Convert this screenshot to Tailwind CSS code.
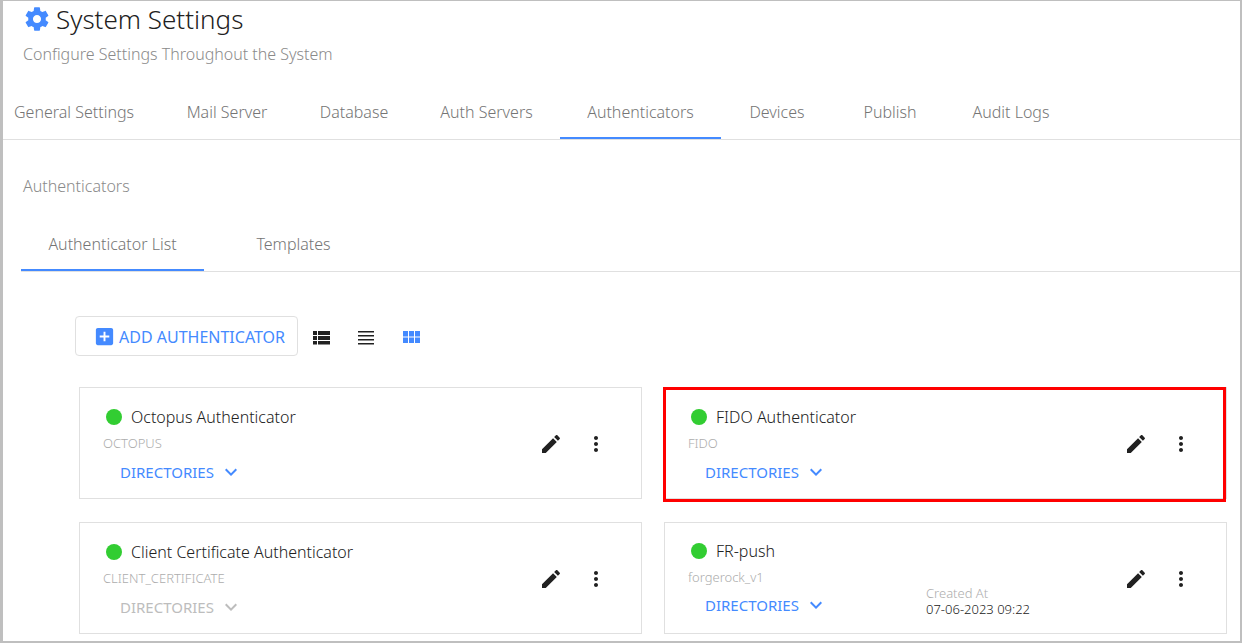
<!DOCTYPE html>
<html lang="en">

<head>
  <meta charset="UTF-8" />
  <meta name="viewport" content="width=device-width, initial-scale=1.0" />
  <title>System Settings</title>
  <script src="https://cdn.jsdelivr.net/npm/@tailwindcss/browser@4"></script>
</head>

<body class="bg-white font-['Noto_Sans',sans-serif] font-light text-[#212121]">

  <!-- Icon set -->
  <svg class="hidden">
    <symbol id="settings" viewBox="0 0 24 24">
      <path d="M19.43 12.98c.04-.32.07-.64.07-.98s-.03-.66-.07-.98l2.11-1.65c.19-.15.24-.42.12-.64l-2-3.46c-.12-.22-.39-.3-.61-.22l-2.49 1c-.52-.4-1.08-.73-1.69-.98l-.38-2.65C14.46 2.18 14.25 2 14 2h-4c-.25 0-.46.18-.49.42l-.38 2.65c-.61.25-1.17.59-1.69.98l-2.49-1c-.23-.09-.49 0-.61.22l-2 3.46c-.13.22-.07.49.12.64l2.11 1.65c-.04.32-.07.65-.07.98s.03.66.07.98l-2.11 1.65c-.19.15-.24.42-.12.64l2 3.46c.12.22.39.3.61.22l2.49-1c.52.4 1.08.73 1.69.98l.38 2.65c.03.24.24.42.49.42h4c.25 0 .46-.18.49-.42l.38-2.65c.61-.25 1.17-.59 1.69-.98l2.49 1c.23.09.49 0 .61-.22l2-3.46c.12-.22.07-.49-.12-.64l-2.11-1.65zM12 15.5c-1.93 0-3.5-1.57-3.5-3.5s1.57-3.5 3.5-3.5 3.5 1.57 3.5 3.5-1.57 3.5-3.5 3.5z" />
    </symbol>
    <symbol id="add-box" viewBox="0 0 24 24">
      <path d="M19 3H5c-1.11 0-2 .9-2 2v14c0 1.1.89 2 2 2h14c1.1 0 2-.9 2-2V5c0-1.1-.9-2-2-2zm-2 10h-4v4h-2v-4H7v-2h4V7h2v4h4v2z" />
    </symbol>
    <symbol id="view-list" viewBox="0 0 24 24">
      <path d="M4 14h4v-4H4v4zm0 4.500h4V15H4v3.500zM4 9h4V5H4v4zm5 5h12v-4H9v4zm0 4.500h12V15H9v3.500zM9 5v4h12V5H9z" />
    </symbol>
    <symbol id="view-headline" viewBox="0 0 24 24">
      <path d="M4 14.500h16V13H4v1.500zm0 4h16V17H4v1.500zm0-8h16V9H4v1.500zM4 5v1.500h16V5H4z" />
    </symbol>
    <symbol id="view-module" viewBox="0 0 24 24">
      <path d="M4 10.500h5V5H4v5.500zm0 6.500h5v-5.500H4V17zm6 0h5v-5.500h-5V17zm6 0h5v-5.500h-5V17zm-6-6.500h5V5h-5v5.500zM16 5v5.500h5V5h-5z" />
    </symbol>
    <symbol id="edit" viewBox="0 0 24 24">
      <path d="M3 17.250V21h3.750L17.810 9.940l-3.750-3.750L3 17.250zM20.710 7.040c.39-.39.39-1.020 0-1.410l-2.340-2.340c-.39-.39-1.020-.39-1.410 0l-1.830 1.830 3.750 3.750 1.830-1.830z" />
    </symbol>
    <symbol id="more" viewBox="0 0 24 24">
      <path d="M12 8c1.100 0 2-.9 2-2s-.9-2-2-2-2 .9-2 2 .9 2 2 2zm0 2c-1.100 0-2 .9-2 2s.9 2 2 2 2-.9 2-2-.9-2-2-2zm0 6c-1.100 0-2 .9-2 2s.9 2 2 2 2-.9 2-2-.9-2-2-2z" />
    </symbol>
    <symbol id="expand" viewBox="0 0 24 24">
      <path d="M16.590 8.590L12 13.170 7.410 8.590 6 10l6 6 6-6z" />
    </symbol>
  </svg>

  <div class="min-h-screen border-t border-l-3 border-r-2 border-b-2 border-[#bfbfbf] pb-[7px]">

    <header>
      <div class="flex h-[35px] items-center gap-[5px] pl-5">
        <svg class="size-7 fill-[#448aff]"><use href="#settings" /></svg>
        <h1 class="text-[26px] leading-8">System Settings</h1>
      </div>
      <p class="flex h-9 items-center pl-5 text-base text-[#8a8a8a]">Configure Settings Throughout the System</p>
    </header>

    <nav class="mt-[17px] flex h-[51px] border-b border-[#e0e0e0] text-base text-[#757575]">
      <a href="#" class="w-[156px] pt-[13px] pl-[11px] leading-5">General Settings</a>
      <a href="#" class="w-[136px] pt-[13px] text-center leading-5">Mail Server</a>
      <a href="#" class="w-[118px] pt-[13px] text-center leading-5">Database</a>
      <a href="#" class="w-[147px] pt-[13px] text-center leading-5">Auth Servers</a>
      <a href="#" class="w-[161px] border-b-2 border-[#448aff] pt-[13px] text-center leading-5">Authenticators</a>
      <a href="#" class="w-28 pt-[13px] text-center leading-5">Devices</a>
      <a href="#" class="w-[114px] pt-[13px] text-center leading-5">Publish</a>
      <a href="#" class="w-32 pt-[13px] text-center leading-5">Audit Logs</a>
    </nav>

    <h2 class="mt-9 pl-5 text-base leading-5 text-[#8a8a8a]">Authenticators</h2>

    <nav class="mt-6 ml-[18px] flex h-[52px] border-b border-[#e0e0e0] text-base text-[#757575]">
      <a href="#" class="w-[183px] border-b-2 border-[#448aff] pt-[14px] text-center leading-5">Authenticator List</a>
      <a href="#" class="w-[179px] pt-[14px] text-center leading-5">Templates</a>
    </nav>

    <main class="pt-11 pr-[13px] pl-[76px]">
      <div class="-ml-1 flex items-center">
        <button class="flex h-10 w-[223px] items-center gap-[3px] rounded border border-[#e0e0e0] pt-px pl-[17px] text-base font-normal text-[#448aff]">
          <svg class="size-[23px] shrink-0 fill-current"><use href="#add-box" /></svg>
          <span class="whitespace-nowrap">ADD AUTHENTICATOR</span>
        </button>
        <div class="ml-[11px] flex gap-[21px] pt-1">
          <button aria-label="List view"><svg class="size-6 fill-[#212121]"><use href="#view-list" /></svg></button>
          <button aria-label="Compact view"><svg class="size-6 fill-[#212121]"><use href="#view-headline" /></svg></button>
          <button aria-label="Grid view"><svg class="size-6 fill-[#448aff]"><use href="#view-module" /></svg></button>
        </div>
      </div>

      <div class="mt-[31px] grid grid-cols-2 gap-x-[22px] gap-y-[23px]">

        <section class="flex h-28 border border-[#e0e0e0] pt-[15px] pr-[33px] pl-[23px]">
          <div class="flex-1">
            <h3 class="flex h-7 items-center gap-[9px] pl-[3px] text-base">
              <span class="size-4 rounded-full bg-[#32cd32]"></span>Octopus Authenticator
            </h3>
            <p class="flex h-[26px] items-center text-[13px] text-[#adadad]">OCTOPUS</p>
            <button class="flex h-[30px] items-center gap-[5px] pl-[17px] text-[15px] font-normal text-[#448aff]">
              DIRECTORIES<svg class="size-6 fill-current"><use href="#expand" /></svg>
            </button>
          </div>
          <div class="flex items-start gap-[21px] pt-[29px]">
            <button aria-label="Edit"><svg class="size-6 fill-[#212121]"><use href="#edit" /></svg></button>
            <button aria-label="More"><svg class="size-6 fill-[#212121]"><use href="#more" /></svg></button>
          </div>
        </section>

        <section class="relative flex h-28 border border-[#e0e0e0] pt-[15px] pr-[33px] pl-[23px]">
          <div class="flex-1">
            <h3 class="flex h-7 items-center gap-[9px] pl-[3px] text-base">
              <span class="size-4 rounded-full bg-[#32cd32]"></span>FIDO Authenticator
            </h3>
            <p class="flex h-[26px] items-center text-[13px] text-[#adadad]">FIDO</p>
            <button class="flex h-[30px] items-center gap-[5px] pl-[17px] text-[15px] font-normal text-[#448aff]">
              DIRECTORIES<svg class="size-6 fill-current"><use href="#expand" /></svg>
            </button>
          </div>
          <div class="flex items-start gap-[21px] pt-[29px]">
            <button aria-label="Edit"><svg class="size-6 fill-[#212121]"><use href="#edit" /></svg></button>
            <button aria-label="More"><svg class="size-6 fill-[#212121]"><use href="#more" /></svg></button>
          </div>
          <!-- Highlight frame -->
          <div class="pointer-events-none absolute -top-px right-0 -bottom-1 -left-0.5 border-3 border-[#f00]"></div>
        </section>

        <section class="flex h-28 border border-[#e0e0e0] pt-[15px] pr-[33px] pl-[23px]">
          <div class="flex-1">
            <h3 class="flex h-7 items-center gap-[9px] pl-[3px] text-base">
              <span class="size-4 rounded-full bg-[#32cd32]"></span>Client Certificate Authenticator
            </h3>
            <p class="flex h-[26px] items-center text-[13px] text-[#adadad]">CLIENT_CERTIFICATE</p>
            <button disabled class="flex h-[30px] items-center gap-[5px] pl-[17px] text-[15px] font-normal text-[#bdbdbd]">
              DIRECTORIES<svg class="size-6 fill-current"><use href="#expand" /></svg>
            </button>
          </div>
          <div class="flex items-start gap-[21px] pt-[29px]">
            <button aria-label="Edit"><svg class="size-6 fill-[#212121]"><use href="#edit" /></svg></button>
            <button aria-label="More"><svg class="size-6 fill-[#212121]"><use href="#more" /></svg></button>
          </div>
        </section>

        <section class="flex h-28 border border-[#e0e0e0] pt-[14px] pr-[33px] pl-[23px]">
          <div class="w-[238px]">
            <h3 class="flex h-7 items-center gap-[9px] pl-[3px] text-base">
              <span class="size-4 rounded-full bg-[#32cd32]"></span>FR-push
            </h3>
            <p class="flex h-[26px] items-center text-[13px] text-[#adadad]">forgerock_v1</p>
            <button class="flex h-7 items-center gap-[5px] pl-[17px] text-[15px] font-normal text-[#448aff]">
              DIRECTORIES<svg class="size-6 fill-current"><use href="#expand" /></svg>
            </button>
          </div>
          <dl class="flex-1 pt-12 text-[13px] leading-4">
            <dt class="text-[#adadad]">Created At</dt>
            <dd>07-06-2023 09:22</dd>
          </dl>
          <div class="flex items-start gap-[21px] pt-[30px]">
            <button aria-label="Edit"><svg class="size-6 fill-[#212121]"><use href="#edit" /></svg></button>
            <button aria-label="More"><svg class="size-6 fill-[#212121]"><use href="#more" /></svg></button>
          </div>
        </section>

      </div>
    </main>
  </div>

</body>

</html>
